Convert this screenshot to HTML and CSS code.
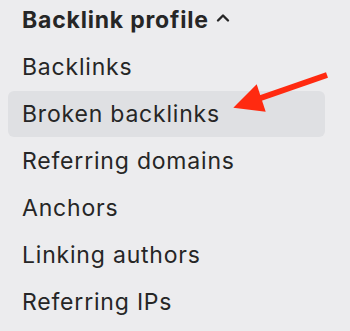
FILE: index.html
```html
<!DOCTYPE html>
<html>
<head>
<meta charset="utf-8">
<link rel="stylesheet" href="styles.css">
</head>
<body>
<div class="panel">
  <div class="heading">Backlink profile
    <svg class="caret" width="14" height="10" viewBox="0 0 14 10"><path d="M2 7.5 L7 2.5 L12 7.5" fill="none" stroke="#262626" stroke-width="2.4" stroke-linecap="round" stroke-linejoin="round"/></svg>
  </div>
  <ul class="menu">
    <li class="item">Backlinks</li>
    <li class="item active">Broken backlinks
      <svg class="arrow" width="110" height="55" viewBox="0 0 110 55"><line x1="102" y1="10" x2="30" y2="35" stroke="#ff2a10" stroke-width="6"/><polygon points="8.3,42.7 31.7,19.3 40.7,46.7" fill="#ff2a10"/></svg>
    </li>
    <li class="item">Referring domains</li>
    <li class="item">Anchors</li>
    <li class="item">Linking authors</li>
    <li class="item">Referring IPs</li>
  </ul>
</div>
</body>
</html>
```
FILE: styles.css
```css
html, body {
  margin: 0;
  padding: 0;
  background: #ececee;
}
body {
  width: 350px;
  height: 331px;
  overflow: hidden;
  font-family: Inter, "Noto Sans", sans-serif;
  color: #262626;
}
.panel {
  padding: 0 25px 0 8px;
}
.heading {
  font-size: 23px;
  letter-spacing: 0.8px;
  font-weight: 700;
  height: 40px;
  line-height: 40px;
  padding-left: 14px;
  margin-bottom: 4px;
  display: flex;
  align-items: center;
  gap: 7px;
}
.caret {
  margin-top: -5px;
}
.menu {
  list-style: none;
  margin: 0;
  padding: 0;
  display: flex;
  flex-direction: column;
  gap: 1px;
}
.item {
  font-size: 23px;
  letter-spacing: 0.8px;
  height: 46px;
  line-height: 46px;
  padding-left: 14px;
  border-radius: 6px;
  position: relative;
}
.item.active {
  background: #dfe0e3;
}
.arrow {
  position: absolute;
  left: 217px;
  top: -26px;
}
```
